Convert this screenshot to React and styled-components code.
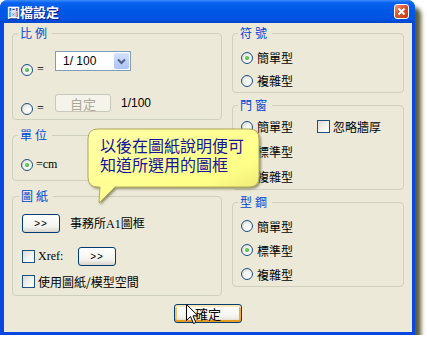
import styled, { createGlobalStyle } from 'styled-components';

const GlobalStyle = createGlobalStyle`
  html, body {
    margin: 0;
    padding: 0;
    background: #ffffff;
  }
  body {
    font-family: "Liberation Serif", "Noto Sans CJK TC", serif;
  }
`;

const cjk = `"Noto Sans CJK TC", "Liberation Sans", sans-serif`;

const Window = styled.div`
  position: relative;
  width: 415px;
  box-sizing: border-box;
  background: #0848E0;
  border-radius: 8px 8px 0 0;
  box-shadow: 6px 7px 4px rgba(62, 62, 22, 0.85);
  display: flex;
  flex-direction: column;
`;

const TitleBar = styled.div`
  height: 23px;
  border-radius: 7px 7px 0 0;
  background: linear-gradient(180deg, #3A8CFF 0%, #0A62F0 12%, #0058E6 45%, #0054E3 80%, #0046CC 100%);
  display: flex;
  align-items: center;
  justify-content: space-between;
  padding: 0 6px 0 7px;
`;

const Title = styled.div`
  font-family: ${cjk};
  font-size: 13px;
  font-weight: 700;
  line-height: 16px;
  color: #ffffff;
  text-shadow: 1px 1px #0A1A8A;
`;

const CloseButton = styled.div`
  width: 15px;
  height: 15px;
  box-sizing: border-box;
  border: 1px solid #ffffff;
  border-radius: 3px;
  background: linear-gradient(135deg, #EE9A80 0%, #D9532A 45%, #C13D14 100%);
  display: flex;
  align-items: center;
  justify-content: center;
`;

const Body = styled.div`
  margin: 0 3px 3px 4px;
  background: #ECE9D8;
  padding: 3px 8px 9px;
  display: flex;
  flex-direction: column;
`;

const Columns = styled.div`
  display: grid;
  grid-template-columns: 210px 172px;
  column-gap: 10px;
`;

const Column = styled.div`
  display: flex;
  flex-direction: column;
`;

const Group = styled.fieldset`
  margin: ${p => p.$mt || 0}px 0 0;
  padding: ${p => p.$pad};
  border: 1px solid #D0D0BF;
  border-radius: 4px;
  min-width: 0;
`;

const Legend = styled.legend`
  padding: 0 2px;
  margin-left: -3px;
  font-family: ${cjk};
  font-size: 12px;
  line-height: 14px;
  letter-spacing: 3px;
  color: #0046D5;
`;

const Row = styled.div`
  display: flex;
  align-items: ${p => p.$align || 'flex-start'};
  margin-top: ${p => p.$mt || 0}px;
`;

const Choice = styled.label`
  display: flex;
  align-items: center;
  gap: ${p => p.$gap ?? 4}px;
  margin-top: ${p => p.$mt || 0}px;
  width: ${p => (p.$w ? `${p.$w}px` : 'auto')};
  flex: none;
  font-family: ${cjk};
  font-size: 12px;
  line-height: 13px;
  color: #000000;
  white-space: nowrap;
`;

const Radio = styled.span`
  width: 12px;
  height: 12px;
  box-sizing: border-box;
  border-radius: 50%;
  border: 1px solid #1C5180;
  background: radial-gradient(circle at 65% 65%, #ffffff 0%, #F4F3EE 45%, #D2D0C6 100%);
  display: flex;
  align-items: center;
  justify-content: center;
  flex: none;

  &::after {
    content: '';
    display: ${p => (p.$on ? 'block' : 'none')};
    width: 4px;
    height: 4px;
    border-radius: 50%;
    background: radial-gradient(circle at 40% 40%, #6CE06C, #1E9A1E);
  }
`;

const Check = styled.span`
  width: 13px;
  height: 13px;
  box-sizing: border-box;
  border: 1px solid #1C5180;
  background: linear-gradient(135deg, #DCDBD5 0%, #F5F5F1 60%, #ffffff 100%);
  flex: none;
`;

const Serif = styled.span`
  font-family: "Liberation Serif", "Noto Sans CJK TC", serif;
  font-size: 12px;
`;

const Select = styled.div`
  width: 76px;
  height: 20px;
  box-sizing: border-box;
  border: 1px solid #7F9DB9;
  background: #ffffff;
  display: flex;
  align-items: center;
  justify-content: space-between;
  padding: 1px;
`;

const SelectText = styled.span`
  padding-left: 6px;
  font-family: "Liberation Sans", sans-serif;
  font-size: 12px;
  color: #000000;
`;

const DropButton = styled.span`
  width: 15px;
  height: 16px;
  border-radius: 2px;
  background: linear-gradient(180deg, #D6E2FD 0%, #BCCDF8 60%, #AFC3F5 100%);
  display: flex;
  align-items: center;
  justify-content: center;
`;

const Button = styled.button`
  width: ${p => p.$w}px;
  height: ${p => p.$h || 19}px;
  margin: 0;
  padding: 0;
  box-sizing: border-box;
  flex: none;
  border: 1px solid ${p => (p.$disabled ? '#C9C7BA' : '#003C74')};
  border-radius: 3px;
  background: ${p => (p.$disabled
    ? '#F5F4EA'
    : 'linear-gradient(180deg, #ffffff 0%, #F3F3EE 70%, #D8D3C8 100%)')};
  box-shadow: ${p => (p.$focus
    ? 'inset 0 2px #FFE8B4, inset 0 -2px #E69A1E, inset 2px 0 #F9C660, inset -2px 0 #F0AC3A'
    : 'none')};
  color: ${p => (p.$disabled ? '#ACA899' : '#000000')};
  font-family: ${p => (p.$small ? '"Liberation Sans", sans-serif' : cjk)};
  font-size: ${p => (p.$small ? 10 : 13)}px;
  letter-spacing: ${p => (p.$small ? 1 : 0)}px;
  line-height: 1;
  display: flex;
  align-items: center;
  justify-content: center;
`;

const Text = styled.span`
  margin-left: ${p => p.$ml || 0}px;
  font-family: ${p => (p.$sans ? '"Liberation Sans", sans-serif' : cjk)};
  font-size: 12px;
  line-height: ${p => p.$lh || 19}px;
  color: #000000;
  white-space: nowrap;
`;

const OptionRow = styled.div`
  display: grid;
  grid-template-columns: ${p => p.$cols || '1fr'};
  align-items: center;
  height: ${p => p.$h}px;
`;

const Footer = styled.div`
  display: flex;
  justify-content: center;
  margin-top: 8px;
`;

const Bubble = styled.div`
  position: absolute;
  left: 87px;
  top: 128px;
  width: 176px;
  height: 80px;
  pointer-events: none;
`;

const BubbleText = styled.div`
  position: absolute;
  left: 13px;
  top: 8px;
  font-family: ${cjk};
  font-size: 16px;
  line-height: 19px;
  color: #14149C;
  white-space: nowrap;
`;

const Cursor = styled.svg`
  position: absolute;
  left: 186px;
  top: 304px;
`;

function Chevron() {
  return (
    <svg width="9" height="7" viewBox="0 0 9 7">
      <path d="M1 1.5 L4.5 5 L8 1.5" fill="none" stroke="#4D6185" strokeWidth="2" />
    </svg>
  );
}

export default function App() {
  return (
    <>
      <GlobalStyle />
      <Window>
        <TitleBar>
          <Title>圖檔設定</Title>
          <CloseButton>
            <svg width="9" height="9" viewBox="0 0 9 9">
              <path d="M1.5 1.5 L7.5 7.5 M7.5 1.5 L1.5 7.5" stroke="#ffffff" strokeWidth="2" />
            </svg>
          </CloseButton>
        </TitleBar>
        <Body>
          <Columns>
            <Column>
              <Group $pad="11px 8px 4px">
                <Legend>比例</Legend>
                <Row>
                  <Choice $w={34} $mt={12}><Radio $on /><Serif>=</Serif></Choice>
                  <Select>
                    <SelectText>1/ 100</SelectText>
                    <DropButton><Chevron /></DropButton>
                  </Select>
                </Row>
                <Row $mt={18}>
                  <Choice $w={34} $mt={8}><Radio /><Serif>=</Serif></Choice>
                  <Button $w={56} $h={18} $disabled>自定</Button>
                  <Text $ml={10} $lh={18} $sans>1/100</Text>
                </Row>
              </Group>
              <Group $mt={8} $pad="16px 8px 9px">
                <Legend>單位</Legend>
                <Choice $gap={3}><Radio $on /><Serif>=cm</Serif></Choice>
              </Group>
              <Group $mt={8} $pad="10px 9px 7px">
                <Legend>圖紙</Legend>
                <Row $align="center">
                  <Button $w={38} $small>&gt;&gt;</Button>
                  <Text $ml={10}>事務所<Serif>A1</Serif>圖框</Text>
                </Row>
                <Row $mt={13} $align="center">
                  <Choice $w={56} $gap={3}><Check /><Serif>Xref:</Serif></Choice>
                  <Button $w={38} $small>&gt;&gt;</Button>
                </Row>
                <Row $mt={9}>
                  <Choice $gap={3}><Check />使用圖紙/模型空間</Choice>
                </Row>
              </Group>
            </Column>
            <Column>
              <Group $pad="6px 8px 0">
                <Legend>符號</Legend>
                <OptionRow $h={23}><Choice><Radio $on />簡單型</Choice></OptionRow>
                <OptionRow $h={23}><Choice><Radio />複雜型</Choice></OptionRow>
              </Group>
              <Group $mt={5} $pad="2px 8px 0">
                <Legend>門窗</Legend>
                <OptionRow $h={25} $cols="76px 1fr">
                  <Choice><Radio />簡單型</Choice>
                  <Choice $gap={3}><Check />忽略牆厚</Choice>
                </OptionRow>
                <OptionRow $h={25}><Choice><Radio />標準型</Choice></OptionRow>
                <OptionRow $h={25}><Choice><Radio />複雜型</Choice></OptionRow>
              </Group>
              <Group $mt={5} $pad="5px 8px 0">
                <Legend>型鋼</Legend>
                <OptionRow $h={24}><Choice><Radio />簡單型</Choice></OptionRow>
                <OptionRow $h={24}><Choice><Radio $on />標準型</Choice></OptionRow>
                <OptionRow $h={24}><Choice><Radio />複雜型</Choice></OptionRow>
              </Group>
            </Column>
          </Columns>
          <Footer>
            <Button $w={68} $focus>確定</Button>
          </Footer>
        </Body>

        <Bubble>
          <svg width="176" height="80" viewBox="0 0 176 80">
            <defs>
              <linearGradient id="bubbleFill" x1="0" y1="0" x2="1" y2="1">
                <stop offset="0" stopColor="#FFFFA8" />
                <stop offset="0.7" stopColor="#FFFF88" />
                <stop offset="1" stopColor="#E6E070" />
              </linearGradient>
              <filter id="bubbleShadow" x="-10%" y="-10%" width="130%" height="130%">
                <feDropShadow dx="1.5" dy="1.5" stdDeviation="1" floodColor="#6B6B40" floodOpacity="0.7" />
              </filter>
            </defs>
            <path
              d="M11 1 H162 Q172 1 172 11 V49 Q172 59 162 59 H28 L12 75 L13 59 H11 Q1 59 1 49 V11 Q1 1 11 1 Z"
              fill="url(#bubbleFill)"
              stroke="#B2AA5C"
              strokeWidth="1"
              filter="url(#bubbleShadow)"
            />
          </svg>
          <BubbleText>
            以後在圖紙說明便可<br />
            知道所選用的圖框
          </BubbleText>
        </Bubble>

        <Cursor width="13" height="21" viewBox="0 0 13 21">
          <path d="M0.5 0.5 V16.5 L4.5 12.5 L7.5 19.5 L9.8 18.5 L7 11.8 H12 Z" fill="#ffffff" stroke="#000000" strokeWidth="1" />
        </Cursor>
      </Window>
    </>
  );
}
